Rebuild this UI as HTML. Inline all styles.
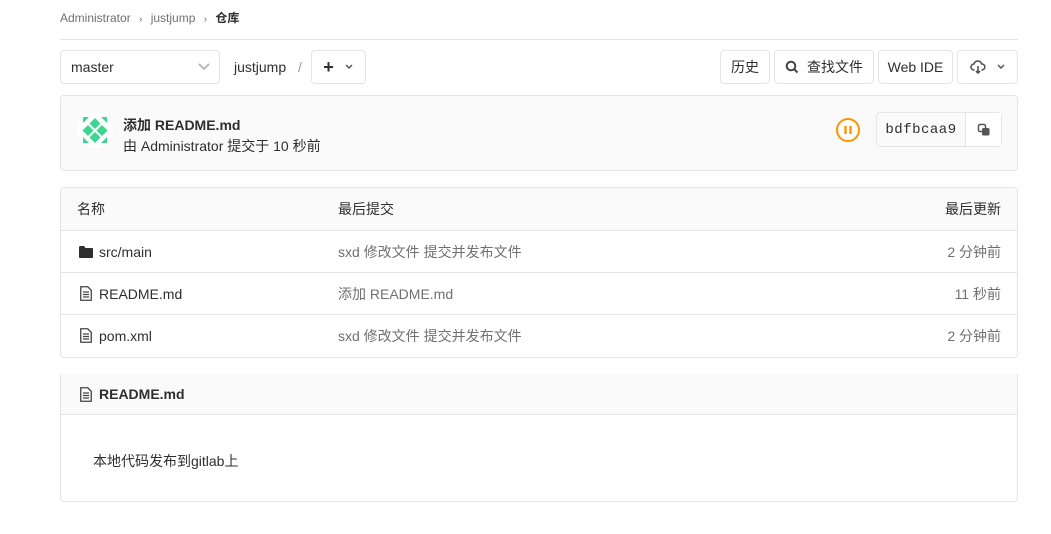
<!DOCTYPE html>
<html><head><meta charset="utf-8"><style>
*{box-sizing:border-box;margin:0;padding:0}
body{width:1051px;height:534px;background:#fff;font-family:"Liberation Sans","Noto Sans CJK SC",sans-serif;font-size:14px;color:#2e2e2e;position:relative;overflow:hidden}
.a{position:absolute}
.btn{position:absolute;top:50px;height:34px;border:1px solid #e5e5e5;border-radius:4px;background:#fff;display:flex;align-items:center;justify-content:center;font-size:14px;color:#2e2e2e}
.row{position:absolute;left:0;right:0;height:42px;border-top:1px solid #e5e5e5;display:flex;align-items:center}
.c1{position:absolute;left:38px}.c2{position:absolute;left:277px;color:#707070}.c3{position:absolute;right:16px;color:#707070}
</style></head><body>
<div class="a" style="left:60px;top:9px;font-size:12px;color:#707070">Administrator <span style="margin:0 5px;font-size:10px">›</span> justjump <span style="margin:0 5px;font-size:10px">›</span> <b style="color:#2e2e2e">仓库</b></div>
<div class="a" style="left:60px;top:39px;width:958px;height:1px;background:#e5e5e5"></div>

<div class="btn" style="left:60px;width:160px;justify-content:flex-start;padding-left:10px">master
<svg class="a" style="right:8px;top:11px" width="14" height="10" viewBox="0 0 14 10"><path d="M2 2l5 5 5-5" stroke="#bbb" stroke-width="2" fill="none"/></svg></div>
<div class="a" style="left:234px;top:59px;color:#2e2e2e">justjump <span style="color:#999;margin-left:8px">/</span></div>
<div class="btn" style="left:311px;width:55px;gap:10px"><b style="font-size:18px;font-weight:bold;line-height:1">+</b><svg width="10" height="8" viewBox="0 0 10 8"><path d="M2 2l3 3 3-3" stroke="#555" stroke-width="1.5" fill="none"/></svg></div>

<div class="btn" style="left:720px;width:50px">历史</div>
<div class="btn" style="left:774px;width:100px;gap:8px"><svg width="14" height="14" viewBox="0 0 14 14"><circle cx="6" cy="6" r="4.3" stroke="#444" stroke-width="2" fill="none"/><path d="M9 9l3.5 3.5" stroke="#444" stroke-width="2"/></svg>查找文件</div>
<div class="btn" style="left:878px;width:75px">Web IDE</div>
<div class="btn" style="left:957px;width:61px;gap:10px"><svg width="16" height="14" viewBox="0 0 16 14"><path d="M4.5 10H4a3 3 0 0 1 0-6 4 4 0 0 1 7.7 0A3 3 0 0 1 12 10h-.5" stroke="#555" stroke-width="1.6" fill="none"/><path d="M8 6v7M6 11l2 2 2-2" stroke="#555" stroke-width="1.6" fill="none"/></svg><svg width="10" height="8" viewBox="0 0 10 8"><path d="M2 2l3 3 3-3" stroke="#555" stroke-width="1.5" fill="none"/></svg></div>

<div class="a" style="left:60px;top:95px;width:958px;height:76px;background:#fafafa;border:1px solid #e5e5e5;border-radius:4px">
 <svg class="a" style="left:16px;top:16px" width="36" height="36" viewBox="0 0 36 36"><circle cx="18" cy="18" r="18" fill="#fff"/>
 <g fill="#3bd68f"><path d="M18 6l5.5 5.5-5.5 5.5-5.5-5.5z"/><path d="M11 13l5.5 5.5-5.5 5.5-5.5-5.5z"/><path d="M25 13l5.5 5.5-5.5 5.5-5.5-5.5z"/><path d="M18 20l5.5 5.5-5.5 5.5-5.5-5.5z"/><path d="M6 5h6l-6 6z"/><path d="M30 5h-6l6 6z"/><path d="M6 31v-6l6 6z"/><path d="M30 31v-6l-6 6z"/></g></svg>
 <div class="a" style="left:62px;top:19px;font-weight:bold;font-size:14px">添加 README.md</div>
 <div class="a" style="left:62px;top:40px;font-size:14px;color:#2e2e2e">由 Administrator 提交于 10 秒前</div>
 <svg class="a" style="left:774px;top:21px" width="26" height="26" viewBox="0 0 26 26"><circle cx="13" cy="13" r="11" stroke="#fc9403" stroke-width="2" fill="#fff"/><path d="M10.5 9v8M15.5 9v8" stroke="#fc9403" stroke-width="2.4"/></svg>
 <div class="a" style="left:815px;top:16px;width:126px;height:35px;border:1px solid #e5e5e5;border-radius:4px;background:#fafafa;display:flex">
  <div style="width:89px;border-right:1px solid #e5e5e5;display:flex;align-items:center;justify-content:center;font-family:'Liberation Mono',monospace;font-size:14px;letter-spacing:.5px">bdfbcaa9</div>
  <div style="flex:1;display:flex;align-items:center;justify-content:center;background:#fff"><svg width="14" height="14" viewBox="0 0 14 14"><rect x="1.5" y="1.5" width="7" height="7" rx="1.5" stroke="#555" stroke-width="1.5" fill="none"/><rect x="5" y="5" width="7.5" height="7.5" rx="1.5" fill="#555"/></svg></div>
 </div>
</div>

<div class="a" style="left:60px;top:187px;width:958px;height:171px;border:1px solid #e5e5e5;border-radius:4px;overflow:hidden">
 <div class="a" style="left:0;right:0;top:0;height:42px;background:#fafafa;display:flex;align-items:center"><span class="a" style="left:16px">名称</span><span class="a" style="left:277px">最后提交</span><span class="a" style="right:16px">最后更新</span></div>
 <div class="row" style="top:42px"><svg class="a" style="left:18px" width="14" height="12" viewBox="0 0 14 12"><path d="M0 1.5A1.5 1.5 0 0 1 1.5 0H5l1.5 2H13a1 1 0 0 1 1 1v8a1 1 0 0 1-1 1H1a1 1 0 0 1-1-1z" fill="#2e2e2e"/></svg><span class="c1">src/main</span><span class="c2">sxd 修改文件 提交并发布文件</span><span class="c3">2 分钟前</span></div>
 <div class="row" style="top:84px"><svg class="a" style="left:19px" width="12" height="15" viewBox="0 0 12 15"><path d="M.75.75h7l3.5 3.5v10H.75z" stroke="#444" stroke-width="1.3" fill="none"/><path d="M3 6h6M3 8.5h6M3 11h6" stroke="#444" stroke-width="1.2"/></svg><span class="c1">README.md</span><span class="c2">添加 README.md</span><span class="c3">11 秒前</span></div>
 <div class="row" style="top:126px"><svg class="a" style="left:19px" width="12" height="15" viewBox="0 0 12 15"><path d="M.75.75h7l3.5 3.5v10H.75z" stroke="#444" stroke-width="1.3" fill="none"/><path d="M3 6h6M3 8.5h6M3 11h6" stroke="#444" stroke-width="1.2"/></svg><span class="c1">pom.xml</span><span class="c2">sxd 修改文件 提交并发布文件</span><span class="c3">2 分钟前</span></div>
</div>

<div class="a" style="left:60px;top:374px;width:958px;height:128px;border:1px solid #e5e5e5;border-top:none;border-radius:0 0 4px 4px">
 <div class="a" style="left:0;right:0;top:0;height:41px;background:#fafafa;border-bottom:1px solid #e5e5e5;display:flex;align-items:center"><svg class="a" style="left:19px" width="12" height="15" viewBox="0 0 12 15"><path d="M.75.75h7l3.5 3.5v10H.75z" stroke="#444" stroke-width="1.3" fill="none"/><path d="M3 6h6M3 8.5h6M3 11h6" stroke="#444" stroke-width="1.2"/></svg><b class="a" style="left:38px">README.md</b></div>
 <div class="a" style="left:32px;top:77px">本地代码发布到gitlab上</div>
</div>
</body></html>
